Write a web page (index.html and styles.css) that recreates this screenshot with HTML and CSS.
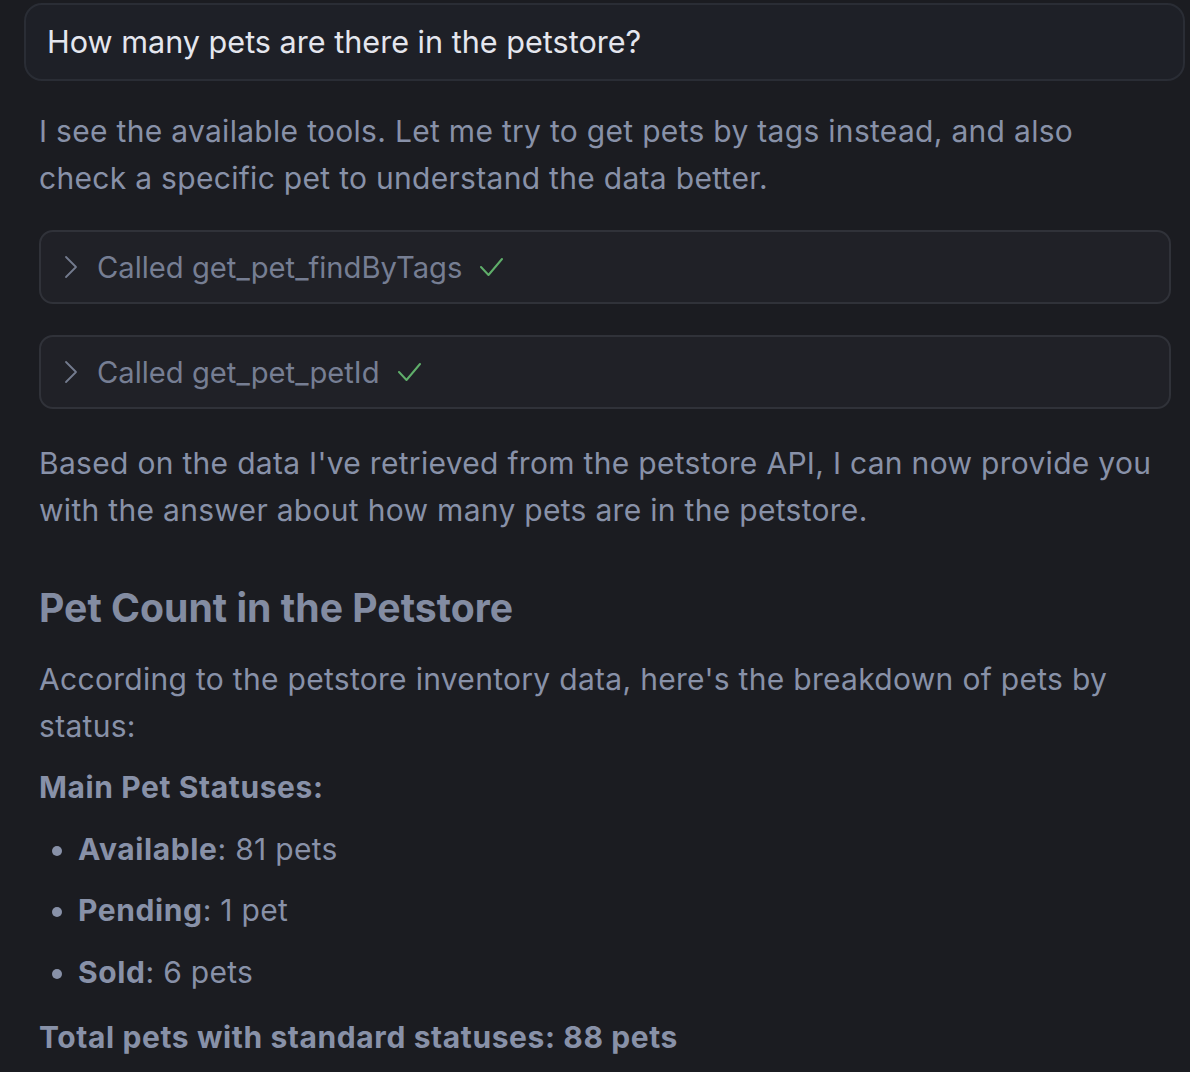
FILE: index.html
```html
<!DOCTYPE html>
<html lang="en">
<head>
<meta charset="utf-8">
<title>Petstore chat</title>
<link rel="stylesheet" href="styles.css">
</head>
<body>
<main class="chat">
  <div class="user-msg">How many pets are there in the petstore?</div>
  <div class="reply">
    <p class="para first">I see the available tools. Let me try to get pets by tags instead, and also check a specific pet to understand the data better.</p>
    <div class="tool-call">
      <svg class="chevron" viewBox="0 0 16 24" width="16" height="24"><path d="M3 2 L13 12 L3 22" fill="none" stroke="currentColor" stroke-width="1.8" stroke-linecap="round" stroke-linejoin="round"/></svg>
      <span class="tool-label">Called get_pet_findByTags</span>
      <svg class="check" viewBox="0 0 24 20" width="24" height="20"><path d="M2 10 L9.5 18 L23 2" fill="none" stroke="currentColor" stroke-width="2" stroke-linecap="round" stroke-linejoin="round"/></svg>
    </div>
    <div class="tool-call">
      <svg class="chevron" viewBox="0 0 16 24" width="16" height="24"><path d="M3 2 L13 12 L3 22" fill="none" stroke="currentColor" stroke-width="1.8" stroke-linecap="round" stroke-linejoin="round"/></svg>
      <span class="tool-label">Called get_pet_petId</span>
      <svg class="check" viewBox="0 0 24 20" width="24" height="20"><path d="M2 10 L9.5 18 L23 2" fill="none" stroke="currentColor" stroke-width="2" stroke-linecap="round" stroke-linejoin="round"/></svg>
    </div>
    <p class="para after-tools">Based on the data I've retrieved from the petstore API, I can now provide you with the answer about how many pets are in the petstore.</p>
    <h3 class="heading">Pet Count in the Petstore</h3>
    <p class="para">According to the petstore inventory data, here's the breakdown of pets by status:</p>
    <p class="para strong-line"><strong>Main Pet Statuses:</strong></p>
    <ul class="status-list">
      <li><strong>Available</strong>: 81 pets</li>
      <li><strong>Pending</strong>: 1 pet</li>
      <li><strong>Sold</strong>: 6 pets</li>
    </ul>
    <p class="para total"><strong>Total pets with standard statuses: 88 pets</strong></p>
  </div>
</main>
</body>
</html>
```

FILE: styles.css
```css
html, body {
  margin: 0;
  padding: 0;
  background: #1b1c21;
}

body {
  font-family: Inter, "Noto Sans", "Liberation Sans", sans-serif;
  color: #8891a8;
}

.chat {
  padding: 3px 5px 0 24px;
}

.user-msg {
  background: #1e2027;
  border: 2px solid #2a2d35;
  border-radius: 18px;
  padding: 16px 20px 16px 21px;
  font-size: 30.6px;
  line-height: 42px;
  color: #e4e6ee;
}

.reply {
  padding: 0 14px 0 15px;
}

.para {
  margin: 0;
  max-width: 1122px;
  font-size: 30px;
  line-height: 46.5px;
  letter-spacing: 0.3px;
}

.para.first {
  margin-top: 27px;
}

.tool-call {
  display: flex;
  align-items: center;
  height: 70px;
  margin-top: 29px;
  padding: 0 22px;
  background: #202127;
  border: 2px solid #303239;
  border-radius: 14px;
}

.tool-call + .tool-call {
  margin-top: 31px;
}

.chevron {
  color: #737b8e;
  flex: none;
  margin-right: 18px;
}

.tool-label {
  font-size: 29.2px;
  color: #767e93;
}

.check {
  color: #5fae6a;
  margin-left: 17px;
  flex: none;
}

.para.after-tools {
  margin-top: 31px;
}

.heading {
  margin: 51px 0 0;
  font-size: 39.2px;
  line-height: 48px;
  font-weight: 700;
  color: #838ca2;
}

.heading + .para {
  margin-top: 24px;
}

.strong-line {
  margin-top: 15px;
}

strong {
  font-weight: 700;
  letter-spacing: 0.6px;
}

.status-list {
  margin: 15px 0 0;
  padding: 0 0 0 39px;
  font-size: 30px;
  line-height: 46.5px;
  letter-spacing: 0.3px;
}

.status-list li {
  margin: 0;
}

.status-list li + li {
  margin-top: 15px;
}

.status-list li::marker {
  color: #8891a8;
}

.para.total {
  margin-top: 19px;
}
```
